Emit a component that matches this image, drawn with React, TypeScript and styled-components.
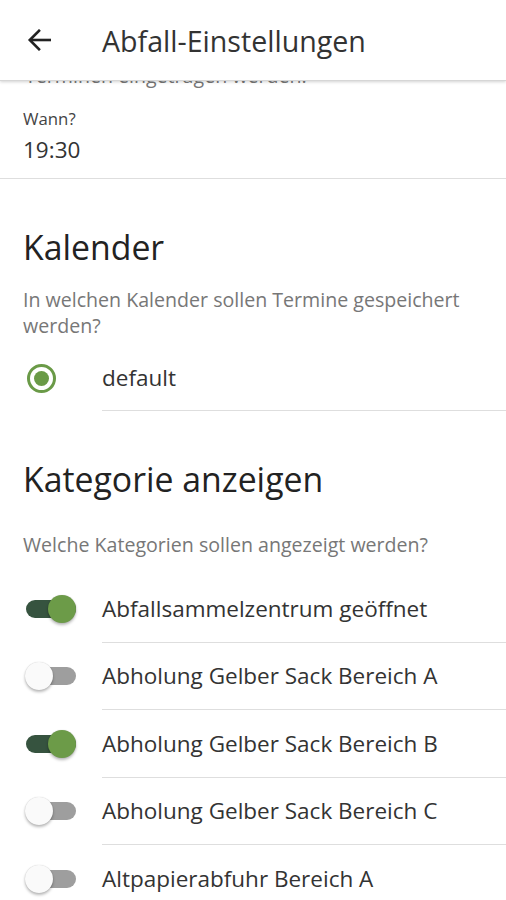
import React from "react";
import styled, { createGlobalStyle } from "styled-components";

const Global = createGlobalStyle`
  html, body { margin: 0; padding: 0; background: #fff; }
  body { font-family: "Open Sans", "Noto Sans", sans-serif; color: #222; overflow: hidden; }
`;

const Page = styled.div`
  width: 506px;
  height: 900px;
  overflow: hidden;
  display: flex;
  flex-direction: column;
`;

const Header = styled.header`
  height: 80px;
  flex: none;
  display: flex;
  align-items: center;
  padding-left: 27px;
  gap: 50px;
  border-bottom: 1px solid #d6d6d6;
  box-shadow: 0 1px 3px rgba(0,0,0,0.18);
  position: relative;
  z-index: 2;
  background: #fff;
`;

const BackButton = styled.button`
  border: 0;
  background: none;
  padding: 0;
  width: 25px;
  height: 22px;
  display: flex;
  cursor: pointer;
  color: #222;
`;

const Title = styled.h1`
  margin: 0;
  font-size: 28.6px;
  font-weight: 400;
  color: #333;
`;

const Content = styled.main`
  display: flex;
  flex-direction: column;
`;

const ClippedLine = styled.div`
  height: 7px;
  overflow: hidden;
  display: flex;
  align-items: flex-end;
  padding: 0 25px;
`;

const ClippedText = styled.span`
  font-size: 19.6px;
  line-height: 26px;
  color: #777;
  margin-bottom: -1px;
  white-space: nowrap;
`;

const Field = styled.div`
  padding: 21px 23px 13px;
  border-bottom: 1px solid #dedede;
  display: flex;
  flex-direction: column;
`;

const FieldLabel = styled.span`
  font-size: 16.8px;
  line-height: 20px;
  color: #444;
`;

const FieldValue = styled.span`
  font-size: 22.5px;
  line-height: 30px;
  color: #333;
  margin-top: 6px;
`;

const Section = styled.section`
  display: flex;
  flex-direction: column;
`;

const SectionTitle = styled.h2<{ $top: number }>`
  margin: ${(p) => p.$top}px 0 0;
  padding: 0 23px;
  font-size: 33.8px;
  line-height: 44px;
  font-weight: 400;
  color: #222;
`;

const Description = styled.p<{ $top: number }>`
  margin: ${(p) => p.$top}px 0 0;
  padding: 0 23px;
  font-size: 19.6px;
  line-height: 26px;
  color: #777;
`;

const List = styled.div<{ $top: number }>`
  margin-top: ${(p) => p.$top}px;
  display: flex;
  flex-direction: column;
`;

const Row = styled.div<{ $h: number }>`
  height: ${(p) => p.$h}px;
  display: flex;
  align-items: center;
`;

const Control = styled.div`
  width: 102px;
  flex: none;
  display: flex;
  align-items: center;
  padding-left: 25px;
  box-sizing: border-box;
  align-self: stretch;
`;

const LabelCell = styled.div<{ $line: boolean }>`
  flex: 1;
  align-self: stretch;
  display: flex;
  align-items: center;
  border-bottom: 1px solid ${(p) => (p.$line ? "#dedede" : "transparent")};
  font-size: 22.5px;
  color: #333;
  white-space: nowrap;
`;

const RadioOuter = styled.span`
  width: 29px;
  height: 29px;
  box-sizing: border-box;
  border: 3px solid #6a9a47;
  border-radius: 50%;
  display: flex;
  align-items: center;
  justify-content: center;
  margin-left: 2px;
`;

const RadioDot = styled.span`
  width: 15px;
  height: 15px;
  border-radius: 50%;
  background: #6a9a47;
`;

const Track = styled.span<{ $on: boolean }>`
  position: relative;
  width: 50px;
  height: 18px;
  border-radius: 9px;
  background: ${(p) => (p.$on ? "#36533f" : "#9e9e9e")};
  display: inline-block;
  margin-left: 1px;
`;

const Thumb = styled.span<{ $on: boolean }>`
  position: absolute;
  top: -5px;
  left: ${(p) => (p.$on ? "22px" : "-1px")};
  width: 28px;
  height: 28px;
  border-radius: 50%;
  background: ${(p) => (p.$on ? "#6c9b48" : "#fafafa")};
  box-shadow: 0 2px 3px rgba(0,0,0,0.28), 0 0 1px rgba(0,0,0,0.2);
`;

const ArrowIcon = () => (
  <svg width="25" height="22" viewBox="0 0 25 22" fill="none">
    <path d="M24 11H3" stroke="#222" strokeWidth="2.6" />
    <path d="M12 1.8L2.8 11L12 20.2" stroke="#222" strokeWidth="2.6" strokeLinecap="square" />
  </svg>
);

const Toggle = ({ on }: { on: boolean }) => (
  <Track $on={on}>
    <Thumb $on={on} />
  </Track>
);

const categories = [
  { name: "Abfallsammelzentrum geöffnet", on: true },
  { name: "Abholung Gelber Sack Bereich A", on: false },
  { name: "Abholung Gelber Sack Bereich B", on: true },
  { name: "Abholung Gelber Sack Bereich C", on: false },
  { name: "Altpapierabfuhr Bereich A", on: false },
];

export default function App() {
  return (
    <Page>
      <Global />
      <Header>
        <BackButton aria-label="Zurück">
          <ArrowIcon />
        </BackButton>
        <Title>Abfall-Einstellungen</Title>
      </Header>
      <Content>
        <ClippedLine>
          <ClippedText>Terminen eingetragen werden.</ClippedText>
        </ClippedLine>
        <Field>
          <FieldLabel>Wann?</FieldLabel>
          <FieldValue>19:30</FieldValue>
        </Field>
        <Section>
          <SectionTitle $top={46}>Kalender</SectionTitle>
          <Description $top={18}>In welchen Kalender sollen Termine gespeichert werden?</Description>
          <List $top={6}>
            <Row $h={66}>
              <Control>
                <RadioOuter>
                  <RadioDot />
                </RadioOuter>
              </Control>
              <LabelCell $line>default</LabelCell>
            </Row>
          </List>
        </Section>
        <Section>
          <SectionTitle $top={46}>Kategorie anzeigen</SectionTitle>
          <Description $top={31}>Welche Kategorien sollen angezeigt werden?</Description>
          <List $top={17}>
            {categories.map((c, i) => (
              <Row key={c.name} $h={67.5}>
                <Control>
                  <Toggle on={c.on} />
                </Control>
                <LabelCell $line={i < categories.length - 1}>{c.name}</LabelCell>
              </Row>
            ))}
          </List>
        </Section>
      </Content>
    </Page>
  );
}
